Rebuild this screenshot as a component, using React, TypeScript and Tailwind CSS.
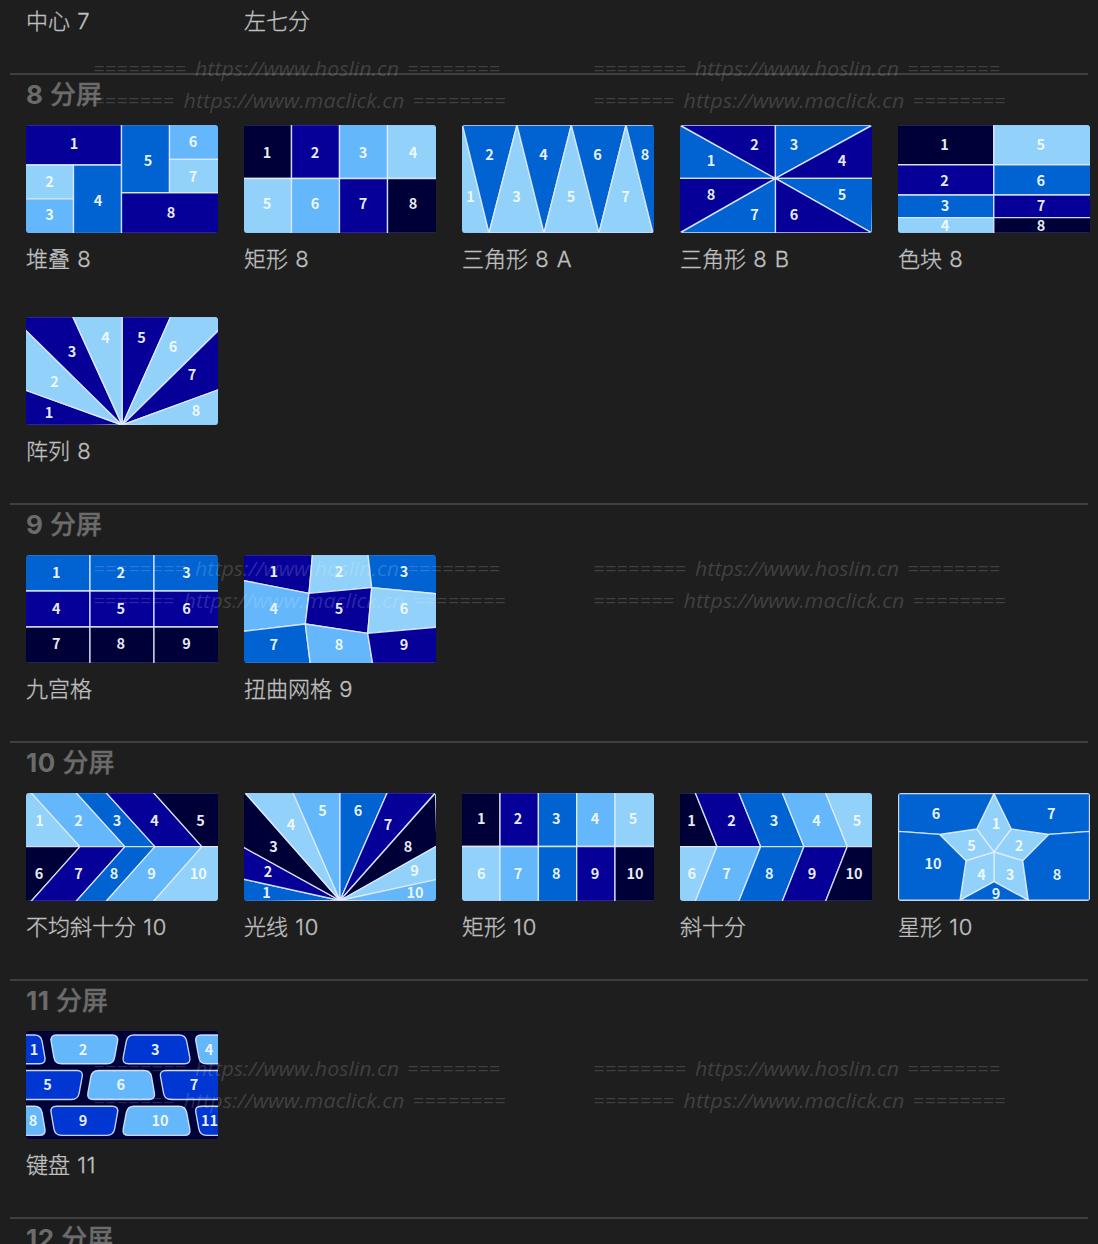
import React from "react";

const INK = "#000038";
const NAVY = "#070098";
const BLUE = "#0063d1";
const SKY = "#63b7fa";
const PALE = "#92d1f9";
const ROYAL = "#0036d1";

type Shape = [fill: string, points: string];
type Mark = [x: number, y: number];
type Layout = {
  name: string;
  shapes: Shape[];
  marks: Mark[];
  keyboard?: boolean;
  framed?: boolean;
};
type Section = { title: string; layouts: Layout[] };

const box = (fill: string, x1: number, y1: number, x2: number, y2: number): Shape => [
  fill,
  `${x1},${y1} ${x2},${y1} ${x2},${y2} ${x1},${y2}`,
];

/** Closed path through the points with softened corners. */
function rounded(points: string, r: number) {
  const p = points.split(" ").map((s) => s.split(",").map(Number));
  const n = p.length;
  const toward = (a: number[], b: number[]) => {
    const d = Math.hypot(b[0] - a[0], b[1] - a[1]);
    return [a[0] + ((b[0] - a[0]) * r) / d, a[1] + ((b[1] - a[1]) * r) / d];
  };
  return (
    p
      .map((c, i) => {
        const a = toward(c, p[(i + n - 1) % n]);
        const b = toward(c, p[(i + 1) % n]);
        return `${i ? "L" : "M"}${a[0]} ${a[1]}Q${c[0]} ${c[1]} ${b[0]} ${b[1]}`;
      })
      .join("") + "Z"
  );
}

const sections: Section[] = [
  {
    title: "8 分屏",
    layouts: [
      {
        name: "堆叠 8",
        shapes: [
          box(NAVY, -2, -2, 95.5, 40),
          box(PALE, -2, 40, 47.5, 73.8),
          box(SKY, -2, 73.8, 47.5, 110),
          box(BLUE, 47.5, 40, 95.5, 110),
          box(BLUE, 95.5, -2, 143.5, 67.7),
          box(SKY, 143.5, -2, 194, 34.4),
          box(PALE, 143.5, 34.4, 194, 67.7),
          box(NAVY, 95.5, 67.7, 194, 110),
        ],
        marks: [[48, 19], [23.5, 57], [23.5, 90], [72, 76], [122, 36], [167, 17], [167, 52], [145, 88]],
      },
      {
        name: "矩形 8",
        shapes: [
          box(INK, -2, -2, 47.5, 53.5),
          box(NAVY, 47.5, -2, 95.5, 53.5),
          box(SKY, 95.5, -2, 143.5, 53.5),
          box(PALE, 143.5, -2, 194, 53.5),
          box(PALE, -2, 53.5, 47.5, 110),
          box(SKY, 47.5, 53.5, 95.5, 110),
          box(NAVY, 95.5, 53.5, 143.5, 110),
          box(INK, 143.5, 53.5, 194, 110),
        ],
        marks: [[23, 27.5], [71, 27.5], [119, 27.5], [169, 27.5], [23, 79], [71, 79], [119, 79], [169, 79]],
      },
      {
        name: "三角形 8 A",
        shapes: [
          [PALE, "-2,-2 0.5,0 27,108 -2,110"],
          [BLUE, "0.5,0 55,0 27,108"],
          [PALE, "55,0 82,108 27,108"],
          [BLUE, "55,0 109.3,0 82,108"],
          [PALE, "109.3,0 137,108 82,108"],
          [BLUE, "109.3,0 164,0 137,108"],
          [PALE, "164,0 191,108 137,108"],
          [BLUE, "164,0 194,0 194,110 191,108"],
        ],
        marks: [[8.5, 71.5], [27.5, 30], [54.5, 71.5], [81.5, 30], [109, 71.5], [135.5, 30], [163.5, 71.5], [183, 30]],
      },
      {
        name: "三角形 8 B",
        shapes: [
          [BLUE, "-1,0 95.4,53.4 -1,53.4"],
          [NAVY, "0,0 95.4,0 95.4,53.4"],
          [BLUE, "95.4,0 192,0 95.4,53.4"],
          [NAVY, "193,0 193,53.4 95.4,53.4"],
          [BLUE, "193,53.4 192,108 95.4,53.4"],
          [NAVY, "95.4,53.4 192,108 95.4,108"],
          [BLUE, "95.4,53.4 95.4,108 0,108"],
          [NAVY, "-1,53.4 95.4,53.4 -1,108"],
        ],
        marks: [[31, 36], [74.5, 20], [114, 20], [162, 36], [162, 70], [114, 89.3], [74.5, 89.3], [31, 70]],
      },
      {
        name: "色块 8",
        shapes: [
          box(INK, -2, -2, 95.8, 39.7),
          box(NAVY, -2, 39.7, 95.8, 70),
          box(BLUE, -2, 70, 95.8, 92.6),
          box(PALE, -2, 92.6, 95.8, 110),
          box(PALE, 95.8, -2, 194, 39.7),
          box(BLUE, 95.8, 39.7, 194, 70),
          box(NAVY, 95.8, 70, 194, 92.6),
          box(INK, 95.8, 92.6, 194, 110),
        ],
        marks: [[46.5, 20], [46.5, 55.5], [47, 80.5], [47, 100.4], [142.7, 20], [142.7, 55.5], [143, 80.5], [143, 100.4]],
      },
      {
        name: "阵列 8",
        shapes: [
          [NAVY, "-1,73 96,108 -1,110"],
          [PALE, "-1,12.5 96,108 -1,73"],
          [NAVY, "-1,-1 46.5,-1 96,108 -1,12.5"],
          [PALE, "46.5,-1 96.3,-1 96.3,108"],
          [NAVY, "96.3,-1 145,-1 96.3,108"],
          [PALE, "145,-1 193,-1 193,12.5 96.3,108"],
          [NAVY, "193,13 193,72.5 96.3,108"],
          [PALE, "193,72.5 193,110 96.3,108"],
        ],
        marks: [[23, 96], [28.5, 65], [46, 35], [79.5, 20.3], [115.5, 20.3], [147, 30], [166, 58], [170, 93.3]],
      },
    ],
  },
  {
    title: "9 分屏",
    layouts: [
      {
        name: "九宫格",
        shapes: [
          box(BLUE, -2, -2, 64, 36),
          box(BLUE, 64, -2, 128, 36),
          box(BLUE, 128, -2, 194, 36),
          box(NAVY, -2, 36, 64, 72),
          box(NAVY, 64, 36, 128, 72),
          box(NAVY, 128, 36, 194, 72),
          box(INK, -2, 72, 64, 110),
          box(INK, 64, 72, 128, 110),
          box(INK, 128, 72, 194, 110),
        ],
        marks: [[30.3, 18], [94.7, 18], [160.5, 18], [30.3, 53.5], [94.7, 53.5], [160.5, 53.5], [30.3, 89], [94.7, 89], [160.5, 89]],
      },
      {
        name: "扭曲网格 9",
        shapes: [
          [NAVY, "-1,-1 68.5,-1 65,38.3 -1,25.5"],
          [PALE, "68.5,-1 124,-1 127.7,32.7 65,38.3"],
          [BLUE, "124,-1 193,-1 193,38.8 127.7,32.7"],
          [SKY, "-1,25.5 65,38.3 61.3,69 -1,76.4"],
          [NAVY, "65,38.3 127.7,32.7 123.7,78.3 61.3,69"],
          [PALE, "127.7,32.7 193,38.8 193,72.2 123.7,78.3"],
          [BLUE, "-1,76.4 61.3,69 66.3,109 -1,109"],
          [SKY, "61.3,69 123.7,78.3 128.7,109 66.3,109"],
          [NAVY, "123.7,78.3 193,72.2 193,109 128.7,109"],
        ],
        marks: [[29.7, 16.5], [95, 16.5], [160, 16.5], [29.7, 54], [95, 54], [160, 54], [29.7, 90], [95, 90], [160, 90]],
      },
    ],
  },
  {
    title: "10 分屏",
    layouts: [
      {
        name: "不均斜十分 10",
        shapes: [
          [PALE, "-1,-1 4.5,-1 54,53.6 -1,53.6"],
          [SKY, "4.5,-1 49.5,-1 99,53.6 54,53.6"],
          [BLUE, "49.5,-1 79.5,-1 129,53.6 99,53.6"],
          [NAVY, "79.5,-1 127,-1 176,53.6 129,53.6"],
          [INK, "127,-1 193,-1 193,53.6 176,53.6"],
          [INK, "-1,53.6 54,53.6 4.5,109 -1,109"],
          [NAVY, "54,53.6 99,53.6 49.5,109 4.5,109"],
          [BLUE, "99,53.6 129,53.6 79.5,109 49.5,109"],
          [SKY, "129,53.6 176,53.6 127,109 79.5,109"],
          [PALE, "176,53.6 193,53.6 193,109 127,109"],
        ],
        marks: [[13.5, 27.5], [52.5, 27.5], [91, 27.5], [128.5, 27.5], [174.5, 27.5], [13, 81], [52.5, 81], [88, 81], [125.5, 81], [172.2, 81]],
      },
      {
        name: "光线 10",
        shapes: [
          [BLUE, "-1,86 96,107.5 -1,109"],
          [NAVY, "-1,54 96,107.5 -1,86"],
          [INK, "-1,-1 1,0 96,107.5 -1,54"],
          [PALE, "1,-0.5 48.7,-1 96,107.5"],
          [SKY, "48.7,-1 96,-1 96,107.5"],
          [BLUE, "96,-1 143.5,-1 96,107.5"],
          [NAVY, "143.5,-1 191.5,-0.5 96,107.5"],
          [INK, "191.5,0 193,53 96,107.5"],
          [PALE, "193,53 193,86.4 96,107.5"],
          [SKY, "193,86.4 193,109 96,107.5"],
        ],
        marks: [[22.5, 99.5], [24, 78.5], [29.5, 53.5], [47, 31.5], [78.5, 18], [114, 18], [144, 31.5], [164, 53.5], [170.5, 77.9], [171, 99.5]],
      },
      {
        name: "矩形 10",
        shapes: [
          box(INK, -2, -2, 38, 53.5),
          box(NAVY, 38, -2, 76.4, 53.5),
          box(BLUE, 76.4, -2, 114.7, 53.5),
          box(SKY, 114.7, -2, 153, 53.5),
          box(PALE, 153, -2, 194, 53.5),
          box(PALE, -2, 53.5, 38, 110),
          box(SKY, 38, 53.5, 76.4, 110),
          box(BLUE, 76.4, 53.5, 114.7, 110),
          box(NAVY, 114.7, 53.5, 153, 110),
          box(INK, 153, 53.5, 194, 110),
        ],
        marks: [[19.3, 26], [56, 26], [94.4, 26], [133, 26], [171, 26], [19.3, 80.5], [56, 80.5], [94.4, 80.5], [133, 80.5], [173, 80.5]],
      },
      {
        name: "斜十分",
        shapes: [
          [INK, "-1,-1 15,-1 37,53.6 -1,53.6"],
          [NAVY, "15,-1 58.5,-1 80.7,53.6 37,53.6"],
          [BLUE, "58.5,-1 102,-1 124,53.6 80.7,53.6"],
          [SKY, "102,-1 145.3,-1 167.3,53.6 124,53.6"],
          [PALE, "145.3,-1 193,-1 193,53.6 167.3,53.6"],
          [PALE, "-1,53.6 37,53.6 15,109 -1,109"],
          [SKY, "37,53.6 80.7,53.6 58.5,109 15,109"],
          [BLUE, "80.7,53.6 124,53.6 102,109 58.5,109"],
          [NAVY, "124,53.6 167.3,53.6 145.3,109 102,109"],
          [INK, "167.3,53.6 193,53.6 193,109 145.3,109"],
        ],
        marks: [[11.5, 28], [51.5, 28], [94, 28], [136.5, 28], [177, 28], [11.7, 81], [46.5, 81], [89.3, 81], [132, 81], [174, 81]],
      },
      {
        name: "星形 10",
        framed: true,
        shapes: [
          [PALE, "96,0.5 113.3,36 96,59 78.7,36"],
          [PALE, "113.3,36 151,41.3 124.7,67.7 96,59"],
          [PALE, "124.7,67.7 130.3,107.2 96,88.7 96,59"],
          [PALE, "96,59 96,88.7 62,107.2 68,67.7"],
          [PALE, "78.7,36 96,59 68,67.7 41.3,41.3"],
          [BLUE, "0.5,0.5 96,0.5 78.7,36 41.3,41.3 0.5,38.3"],
          [BLUE, "96,0.5 191.5,0.5 191.5,38.3 151,41.3 113.3,36"],
          [BLUE, "191.5,38.3 191.5,107.2 130.3,107.2 124.7,67.7 151,41.3"],
          [BLUE, "62,107.2 96,88.7 130.3,107.2"],
          [BLUE, "0.5,38.3 41.3,41.3 68,67.7 62,107.2 0.5,107.2"],
        ],
        marks: [[98, 31], [121, 52.5], [112, 81.5], [83.5, 81.5], [73.5, 52.5], [38, 20.5], [153.3, 20.5], [159, 81.5], [98, 101], [35, 70.5]],
      },
    ],
  },
  {
    title: "11 分屏",
    layouts: [
      {
        name: "键盘 11",
        keyboard: true,
        shapes: [
          [ROYAL, "-20,4 15,4 20,32.7 -20,32.7"],
          [SKY, "24,4 92.7,4 87.5,32.7 29,32.7"],
          [ROYAL, "101.5,4 159.5,4 165,32.7 96,32.7"],
          [SKY, "168.7,4 220,4 220,32.7 174,32.7"],
          [ROYAL, "-20,39.5 57.3,39.5 52,68.5 -20,68.5"],
          [SKY, "66,39.5 124.5,39.5 129.5,68.5 60.7,68.5"],
          [ROYAL, "133.4,39.5 220,39.5 220,68.5 138.7,68.5"],
          [SKY, "-20,75.2 15,75.2 20,104.3 -20,104.3"],
          [ROYAL, "24,75.2 92.7,75.2 87.5,104.3 29,104.3"],
          [SKY, "101.5,75.2 159.5,75.2 165,104.3 96,104.3"],
          [ROYAL, "168.7,75.2 220,75.2 220,104.3 174,104.3"],
        ],
        marks: [[8, 18.3], [57, 18.3], [129.3, 18.3], [183, 18.3], [21.5, 54], [94.7, 54], [168, 54], [7, 89.7], [57, 89.7], [134, 89.7], [183.5, 89.7]],
      },
    ],
  },
  { title: "12 分屏", layouts: [] },
];

function Thumbnail({ layout }: { layout: Layout }) {
  return (
    <svg width="192" height="108" viewBox="0 0 192 108" className="block rounded-[3px]">
      {layout.keyboard && <rect width="192" height="108" fill={INK} />}
      <g stroke="#e3edff" strokeOpacity="0.88" strokeWidth="1.35" strokeLinejoin="round">
        {layout.shapes.map(([fill, points], i) =>
          layout.keyboard ? (
            <path key={i} d={rounded(points, 6.5)} fill={fill} />
          ) : (
            <polygon key={i} points={points} fill={fill} />
          ),
        )}
      </g>
      {!layout.framed && !layout.keyboard && (
        <path d="M0 0H192M0 108H192" stroke="#b9b0e8" strokeOpacity="0.4" strokeWidth="1" />
      )}
      <g
        fill="#f4fbff"
        fillOpacity="0.95"
        textAnchor="middle"
        className="font-['Noto_Sans_CJK_SC',sans-serif] text-[14.5px] font-bold"
      >
        {layout.marks.map(([x, y], i) => (
          <text key={i} x={x} y={y + 5.3}>
            {i + 1}
          </text>
        ))}
      </g>
    </svg>
  );
}

function Caption({ text }: { text: string }) {
  const [name, ...suffix] = text.split(" ");
  return (
    <div className="h-[30px] text-[22px] leading-[30px] font-light whitespace-nowrap text-[#c0c0c0] [-webkit-text-stroke:0.3px_#c0c0c0]">
      {name}
      {suffix.length > 0 && <span className="tracking-[1px]"> {suffix.join(" ")}</span>}
    </div>
  );
}

function Heading({ text }: { text: string }) {
  const [count, label] = text.split(" ");
  return (
    <h2 className="h-[50px] pl-[26px] text-[26px] leading-[40px] font-medium whitespace-nowrap text-[#6b6b6b]">
      <span className="font-bold tracking-[0.5px]">{count} </span>
      <span className="[-webkit-text-stroke:0.3px_#6b6b6b]">{label}</span>
    </h2>
  );
}

function Watermark() {
  return (
    <svg
      width="420"
      height="64"
      fill="#ffffff"
      fillOpacity="0.16"
      className="shrink-0 font-['Open_Sans','Noto_Sans',sans-serif] text-[20px] italic"
    >
      <text x="0" y="25.5" textLength="93">========</text>
      <text x="102" y="25.5" textLength="204" lengthAdjust="spacingAndGlyphs">https://www.hoslin.cn</text>
      <text x="314" y="25.5" textLength="93">========</text>
      <text x="0" y="57.5" textLength="81">=======</text>
      <text x="90.5" y="57.5" textLength="221" lengthAdjust="spacingAndGlyphs">https://www.maclick.cn</text>
      <text x="319.5" y="57.5" textLength="93">========</text>
    </svg>
  );
}

export default function App() {
  return (
    <div className="relative h-[1244px] w-[1098px] overflow-hidden bg-[#1e1e1e] font-['Inter','Noto_Sans_CJK_SC',sans-serif]">
      <div className="flex h-[73px] gap-[26px] pt-[6px] pl-[26px]">
        <div className="w-48">
          <Caption text="中心 7" />
        </div>
        <div className="w-48">
          <Caption text="左七分" />
        </div>
      </div>

      {sections.map((section) => (
        <section key={section.title}>
          <div className="mr-[10px] ml-[10px] h-0.5 bg-[#3f3f3f]" />
          <Heading text={section.title} />
          <div className="grid grid-cols-[repeat(5,192px)] gap-x-[26px] gap-y-[6px] pl-[26px]">
            {section.layouts.map((layout) => (
              <figure key={layout.name} className="h-[186px]">
                <Thumbnail layout={layout} />
                <figcaption className="pt-[11px]">
                  <Caption text={layout.name} />
                </figcaption>
              </figure>
            ))}
          </div>
        </section>
      ))}

      <div className="pointer-events-none absolute top-[50px] left-[93px] flex flex-col gap-[436px]">
        {[0, 1, 2].map((row) => (
          <div key={row} className="flex gap-20">
            <Watermark />
            <Watermark />
          </div>
        ))}
      </div>
    </div>
  );
}
